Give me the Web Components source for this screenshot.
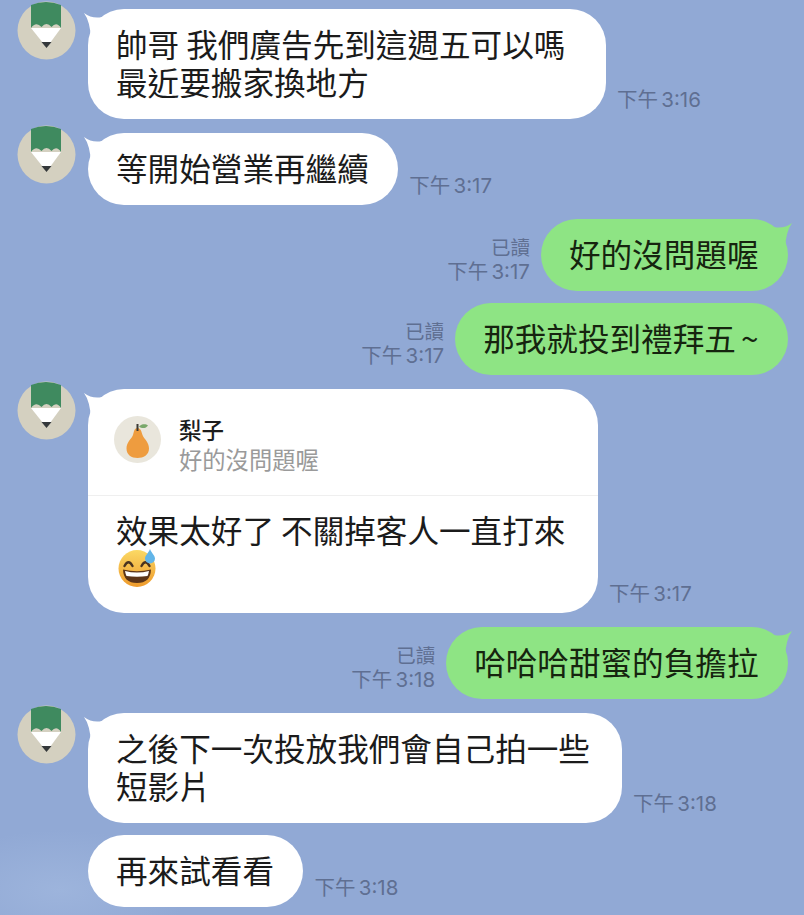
<!DOCTYPE html>
<html lang="zh-Hant">
<head>
<meta charset="utf-8">
<title>chat</title>
<style>
  html, body { margin: 0; height: 100%; }
  body { background: #91a9d5; overflow: hidden; }
</style>
</head>
<body>
<chat-thread>
  <chat-message from="them" avatar tail time="下午 3:16" width="518">帥哥 我們廣告先到這週五可以嗎<br>最近要搬家換地方</chat-message>
  <chat-message from="them" avatar tail time="下午 3:17">等開始營業再繼續</chat-message>
  <chat-message from="me" tail read time="下午 3:17">好的沒問題喔</chat-message>
  <chat-message from="me" read time="下午 3:17" gap="12" tight>那我就投到禮拜五 ~</chat-message>
  <chat-message from="them" avatar tail time="下午 3:17" width="510" card>
    <reply-quote slot="quote" name="梨子">好的沒問題喔</reply-quote>
    效果太好了 不關掉客人一直打來<br><sweat-smile></sweat-smile>
  </chat-message>
  <chat-message from="me" tail read time="下午 3:18">哈哈哈甜蜜的負擔拉</chat-message>
  <chat-message from="them" avatar tail time="下午 3:18" width="534">之後下一次投放我們會自己拍一些<br>短影片</chat-message>
  <chat-message from="them" time="下午 3:18" gap="12" indent>再來試看看</chat-message>
</chat-thread>

<script>
const FONT = '"Noto Sans CJK TC", "Noto Sans CJK SC", sans-serif';

customElements.define("chat-thread", class extends HTMLElement {
  constructor() {
    super();
    this.attachShadow({ mode: "open" }).innerHTML = `
      <style>
        :host {
          display: flex;
          flex-direction: column;
          box-sizing: border-box;
          width: 804px;
          height: 915px;
          padding: 9px 16px 0 17px;
          font-family: ${FONT};
          background:
            radial-gradient(ellipse 130px 60px at 60px 890px, #9db4dc 0, rgba(157,180,220,0) 100%),
            #91a9d5;
        }
      </style>
      <slot></slot>`;
  }
});

customElements.define("pencil-avatar", class extends HTMLElement {
  constructor() {
    super();
    this.attachShadow({ mode: "open" }).innerHTML = `
      <style>
        :host { display: block; width: 59px; height: 59px; }
        svg { display: block; overflow: visible; }
      </style>
      <svg width="59" height="59" viewBox="0 0 59 59">
        <circle cx="29.500" cy="29.500" r="29" fill="#d4d0c0"/>
        <path d="M14 27 H44 L33 42 H26Z" fill="#fff"/>
        <path d="M14 4 Q29 -2 44 4 V27 Q39.500 20 34.500 26 Q29.500 20 24.500 26 Q19 20 14 27Z" fill="#3f8a5f"/>
        <path d="M24.500 41 H34.500 L29.500 47Z" fill="#34383a"/>
      </svg>`;
  }
});

customElements.define("pear-avatar", class extends HTMLElement {
  constructor() {
    super();
    this.attachShadow({ mode: "open" }).innerHTML = `
      <style>
        :host { display: block; width: 47px; height: 47px; flex: none; margin-top: -6px; }
        svg { display: block; }
      </style>
      <svg width="47" height="47" viewBox="0 0 47 47">
        <circle cx="23.500" cy="23.500" r="23.500" fill="#e9e6dc"/>
        <path d="M23.500 12 C27 12 27.500 16 28.500 19 C30 23 35 26 35 32.500 C35 39 29.500 42 23.500 42 C17.500 42 12.500 39 12.500 32.500 C12.500 26 17.500 23 19 19 C20 16 20 12 23.500 12Z" fill="#ee9c3f"/>
        <rect x="22.500" y="8" width="2" height="7" fill="#3c3a35"/>
        <path d="M25 10.500 C28 7.500 32 8 34 9.500 C32 12.500 28 13 25 10.500Z" fill="#79a86a"/>
      </svg>`;
  }
});

customElements.define("sweat-smile", class extends HTMLElement {
  constructor() {
    super();
    this.attachShadow({ mode: "open" }).innerHTML = `
      <style>
        :host { display: inline-block; width: 38px; height: 38px; vertical-align: -6px; margin-left: 2px; }
        svg { display: block; }
      </style>
      <svg width="38" height="38" viewBox="0 0 38 38">
        <defs>
          <linearGradient id="face" x1="0" y1="0" x2="0" y2="1">
            <stop offset="0" stop-color="#fbd964"/>
            <stop offset="1" stop-color="#ee9a2c"/>
          </linearGradient>
        </defs>
        <circle cx="19" cy="19.500" r="18.500" fill="url(#face)"/>
        <path d="M6.500 17 Q10.500 9.500 14.500 17 M23.500 17 Q27.500 9.500 31.500 17" fill="none" stroke="#4a3320" stroke-width="2.400" stroke-linecap="round"/>
        <path d="M5 20.500 Q19 24 33 20.500 Q32.500 34 19 34 Q5.500 34 5 20.500Z" fill="#5b3418"/>
        <path d="M7 22 Q19 25 31 22 Q30.500 25 29.500 27 Q19 28.500 8.500 27 Q7.500 25 7 22Z" fill="#fff"/>
        <path d="M32 0 C33.500 4 37 6.500 37 9.500 A5 5 0 0 1 27 9.500 C27 6.500 30.500 4 32 0Z" fill="#62b5e8"/>
      </svg>`;
  }
});

customElements.define("reply-quote", class extends HTMLElement {
  constructor() {
    super();
    this.attachShadow({ mode: "open" }).innerHTML = `
      <style>
        :host {
          display: flex;
          align-items: center;
          gap: 18px;
          height: 107px;
          box-sizing: border-box;
          padding: 0 26px;
          border-bottom: 1px solid #efefef;
        }
        .copy { margin-top: 4px; }
        .name { font-size: 22.500px; font-weight: 500; line-height: 30px; color: #1c1c1c; }
        .text { font-size: 23.300px; line-height: 31px; color: #9a9a9a; }
      </style>
      <pear-avatar></pear-avatar>
      <div class="copy">
        <div class="name"></div>
        <div class="text"><slot></slot></div>
      </div>`;
  }
  connectedCallback() {
    this.shadowRoot.querySelector(".name").textContent = this.getAttribute("name");
  }
});

customElements.define("chat-message", class extends HTMLElement {
  constructor() {
    super();
    this.attachShadow({ mode: "open" }).innerHTML = `
      <style>
        :host { display: flex; align-items: flex-end; margin-top: var(--gap, 14px); }
        :host(:first-child) { margin-top: 0; }
        :host([from="me"]) { flex-direction: row-reverse; }
        pencil-avatar { flex: none; align-self: flex-start; margin: -8px 12px 0 0; }
        .spacer { flex: none; width: 71px; }
        .bubble {
          position: relative;
          flex: none;
          box-sizing: border-box;
          border-radius: 36px;
          background: #fff;
          color: #1b1b1b;
        }
        :host([from="me"]) .bubble { background: #8ee484; color: #16240f; }
        .body {
          padding: 15px 29.500px 19px 28px;
          font-size: 31.600px;
          line-height: 38px;
          white-space: nowrap;
        }
        :host([tight]) .body { word-spacing: -2px; }
        :host([card]) .body { padding-top: 14px; padding-bottom: 26px; }
        .tail { position: absolute; top: 0; width: 26px; height: 30px; display: none; }
        :host([tail]) .tail { display: block; }
        :host([from="them"]) .tail { left: -6px; fill: #fff; }
        :host([from="me"]) .tail { right: -6px; fill: #8ee484; }
        .meta {
          flex: none;
          margin: 0 11px 8px;
          font-family: "Inter", ${FONT};
          font-size: 20.500px;
          word-spacing: -2.500px;
          line-height: 23px;
          color: #5f6f92;
          text-align: right;
          white-space: nowrap;
        }
        .read { font-size: 19.500px; }
      </style>
      <pencil-avatar></pencil-avatar>
      <div class="spacer"></div>
      <div class="bubble">
        <svg class="tail" viewBox="0 0 26 30"><path d=""/></svg>
        <slot name="quote"></slot>
        <div class="body"><slot></slot></div>
      </div>
      <div class="meta"></div>`;
  }
  connectedCallback() {
    const root = this.shadowRoot;
    const them = this.getAttribute("from") === "them";
    if (!this.hasAttribute("avatar")) root.querySelector("pencil-avatar").style.display = "none";
    if (!this.hasAttribute("indent")) root.querySelector(".spacer").style.display = "none";
    root.querySelector(".tail path").setAttribute("d", them
      ? "M2 4 Q10 10 20 8 L20 30 H9 Q8 12 2 4Z"
      : "M24 4 Q16 10 6 8 L6 30 H17 Q18 12 24 4Z");
    if (this.hasAttribute("width")) root.querySelector(".bubble").style.width = this.getAttribute("width") + "px";
    if (this.hasAttribute("gap")) this.style.setProperty("--gap", this.getAttribute("gap") + "px");
    const meta = root.querySelector(".meta");
    if (this.hasAttribute("read")) {
      const read = document.createElement("div");
      read.className = "read";
      read.textContent = "已讀";
      meta.append(read);
    }
    meta.append(this.getAttribute("time"));
  }
});
</script>
</body>
</html>
